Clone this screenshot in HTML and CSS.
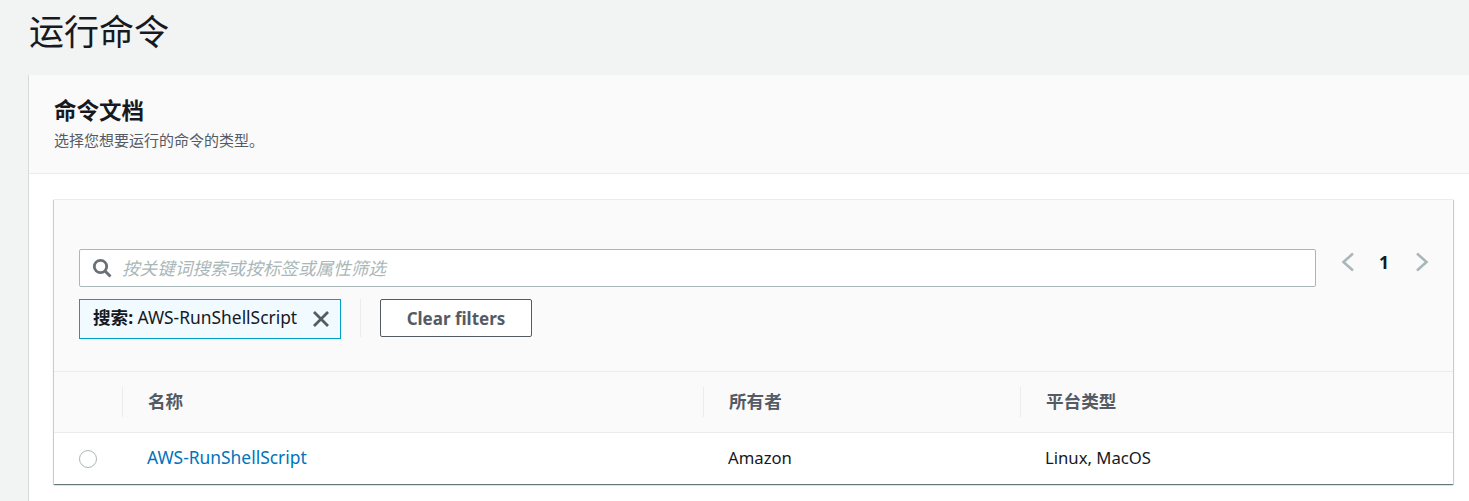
FILE: index.html
```html
<!DOCTYPE html>
<html lang="zh-CN">
<head>
    <meta charset="UTF-8">
    <meta name="viewport" content="width=device-width, initial-scale=1.0">
    <title>运行命令</title>
    <link rel="stylesheet" href="styles.css">
</head>
<body>
    <h1 class="page-title">运行命令</h1>

    <div class="card">
        <div class="card-header">
            <h2>命令文档</h2>
            <p>选择您想要运行的命令的类型。</p>
        </div>
        <div class="card-body">
            <div class="table-box">
                <div class="filter-area">
                    <div class="search-row">
                        <div class="search-box">
                            <svg class="search-icon" width="20" height="20" viewBox="0 0 20 20">
                                <circle cx="8.500" cy="8.500" r="6.200" fill="none" stroke="#687078" stroke-width="2.800"/>
                                <path d="M13 13l5.500 5.500" fill="none" stroke="#687078" stroke-width="3"/>
                            </svg>
                            <span class="placeholder">按关键词搜索或按标签或属性筛选</span>
                        </div>
                        <div class="pager">
                            <svg width="14" height="20" viewBox="0 0 14 20"><path d="M12 1.500L2.500 10l9.500 8.500" fill="none" stroke="#aab7b8" stroke-width="2.600"/></svg>
                            <span class="page-num">1</span>
                            <svg width="14" height="20" viewBox="0 0 14 20"><path d="M2 1.500L11.500 10 2 18.500" fill="none" stroke="#aab7b8" stroke-width="2.600"/></svg>
                        </div>
                    </div>
                    <div class="token-row">
                        <div class="token">
                            <span class="token-text"><b class="token-label">搜索:</b> <span class="script-name">AWS-RunShellScript</span></span>
                            <svg width="18" height="18" viewBox="0 0 18 18"><path d="M2 2l14 14M16 2L2 16" fill="none" stroke="#545b64" stroke-width="2.800"/></svg>
                        </div>
                        <div class="token-sep"></div>
                        <button class="clear-button">Clear filters</button>
                    </div>
                </div>
                <div class="table-row table-head">
                    <div class="cell cell-radio"></div>
                    <div class="cell cell-name"><span class="head-label">名称</span></div>
                    <div class="cell cell-owner"><span class="head-label">所有者</span></div>
                    <div class="cell cell-platform"><span class="head-label">平台类型</span></div>
                </div>
                <div class="table-row table-data">
                    <div class="cell cell-radio"><span class="radio"></span></div>
                    <div class="cell cell-name"><a class="script-name" href="#">AWS-RunShellScript</a></div>
                    <div class="cell cell-owner">Amazon</div>
                    <div class="cell cell-platform">Linux, MacOS</div>
                </div>
            </div>
        </div>
    </div>
</body>
</html>
```

FILE: styles.css
```css
html, body {
    height: 100%;
}
body {
    margin: 0;
    background-color: #f2f3f3;
    font-family: "Noto Sans", "Noto Sans CJK SC", sans-serif;
    font-size: 16.700px;
    color: #16191f;
    overflow: hidden;
}
.page-title {
    margin: 0;
    height: 75px;
    padding: 10px 0 0 29px;
    box-sizing: border-box;
    font-size: 35px;
    line-height: 44px;
    font-weight: 400;
}
.card {
    margin-left: 28px;
    width: 1460px;
    height: 426px;
    background-color: #fff;
    border-left: 1px solid #d5dbdb;
}
.card-header {
    height: 99px;
    box-sizing: border-box;
    padding: 22px 25px 0;
    background-color: #fafafa;
    border-bottom: 1px solid #eaeded;
}
.card-header h2 {
    margin: 0;
    font-size: 22.500px;
    line-height: 28px;
    font-weight: 700;
}
.card-header p {
    margin: 3px 0 0;
    font-size: 15px;
    line-height: 24px;
    color: #545b64;
}
.card-body {
    padding: 25px 0 0 25px;
}
.table-box {
    width: 1399px;
    height: 285px;
    background-color: #fff;
    border-top: 1px solid #eaeded;
    box-sizing: border-box;
    box-shadow: 0 1px 1px rgba(0, 28, 36, 0.45), 1px 1px 1px rgba(0, 28, 36, 0.15), -1px 1px 1px rgba(0, 28, 36, 0.15);
}
.filter-area {
    height: 172px;
    box-sizing: border-box;
    padding: 49px 0 0 25px;
    background-color: #fafafa;
    border-bottom: 1px solid #eaeded;
}
.search-row {
    display: flex;
    align-items: center;
}
.search-box {
    width: 1237px;
    height: 38px;
    box-sizing: border-box;
    display: flex;
    align-items: center;
    gap: 10px;
    padding-left: 12px;
    background-color: #fff;
    border: 1px solid #aab7b8;
    border-radius: 2px;
}
.placeholder {
    font-style: italic;
    font-size: 17.600px;
    line-height: 22px;
    margin-top: -1px;
    color: #aab7b8;
}
.pager {
    display: flex;
    align-items: center;
    margin-left: 25px;
    margin-top: -12px;
}
.pager svg {
    flex-shrink: 0;
}
.page-num {
    width: 60px;
    box-sizing: border-box;
    padding-right: 2px;
    text-align: center;
    font-size: 17.600px;
    font-weight: 700;
}
.token-row {
    display: flex;
    margin-top: 12px;
}
.token {
    width: 262px;
    height: 40px;
    box-sizing: border-box;
    display: flex;
    align-items: center;
    justify-content: space-between;
    padding: 0 10px 0 13px;
    background-color: #f1faff;
    border: 1px solid #00a1c9;
}
.token-text {
    line-height: 22px;
    margin-top: -3px;
    white-space: nowrap;
}
.token-label {
    font-size: 17.600px;
}
.script-name {
    font-size: 17.400px;
}
.token-sep {
    width: 1px;
    height: 38px;
    margin: 0 19px;
    background-color: #eaeded;
}
.clear-button {
    width: 152px;
    height: 38px;
    background-color: #fff;
    border: 1px solid #545b64;
    border-radius: 2px;
    font-family: inherit;
    font-size: 17px;
    font-weight: 700;
    color: #545b64;
}
.table-row {
    display: flex;
    align-items: center;
}
.table-head {
    height: 61px;
    background-color: #fafafa;
    border-bottom: 1px solid #eaeded;
    box-sizing: border-box;
    color: #545b64;
    font-weight: 700;
}
.table-data {
    height: 51px;
}
.cell {
    box-sizing: border-box;
}
.cell-radio {
    width: 68px;
    padding-left: 25px;
}
.cell-name {
    width: 581px;
}
.cell-owner {
    width: 317px;
}
.table-head .cell-name, .table-head .cell-owner, .table-head .cell-platform {
    border-left: 1px solid #eaeded;
    padding-left: 25px;
    height: 30px;
    font-size: 17.600px;
    line-height: 28px;
}
.table-data .cell-name {
    padding-left: 25px;
    line-height: 24px;
    margin-top: -3px;
}
.table-data .cell-owner, .table-data .cell-platform {
    padding-left: 25px;
    line-height: 24px;
    margin-top: -1px;
}
.radio {
    display: block;
    width: 18px;
    height: 18px;
    box-sizing: border-box;
    border: 1.500px solid #aab7b8;
    border-radius: 50%;
    background-color: #fff;
}
a {
    color: #0073bb;
    text-decoration: none;
}
```
